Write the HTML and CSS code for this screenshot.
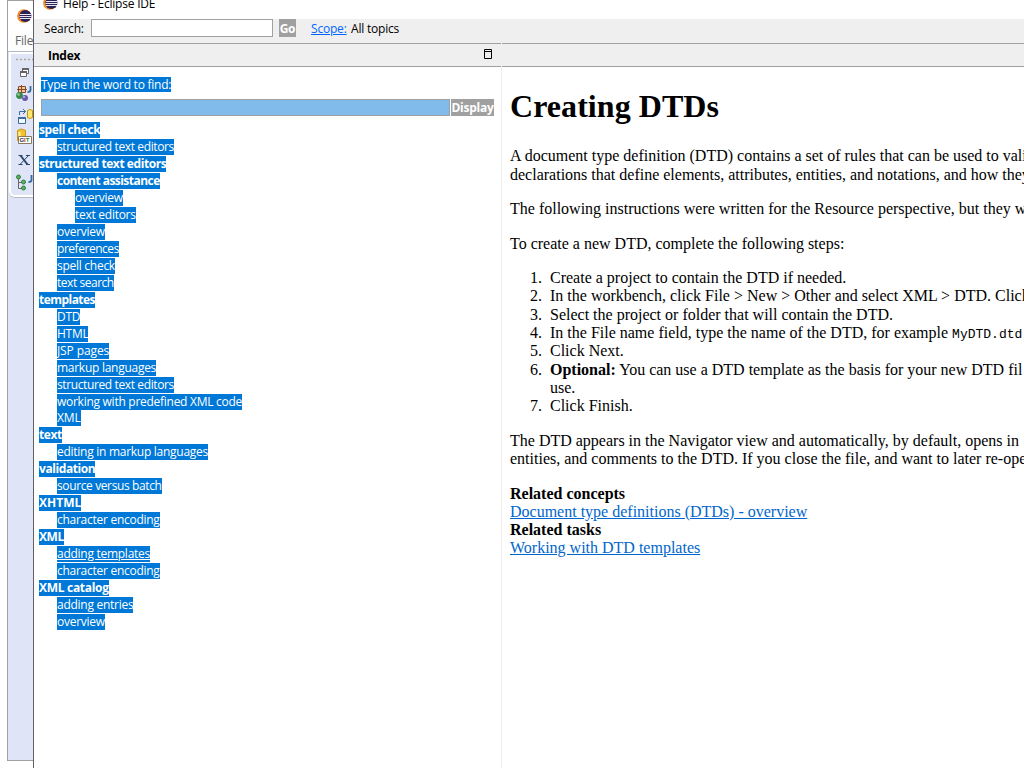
FILE: index.html
```html
<!DOCTYPE html>
<html lang="en">
<head>
<meta charset="utf-8">
<title>Help - Eclipse IDE</title>
<link rel="stylesheet" href="styles.css">
</head>
<body>
<svg width="0" height="0" class="defs"><defs>
<symbol id="eclipse" viewBox="0 0 15 14"><circle cx="6.800" cy="7" r="6.700" fill="#f28c28"/><circle cx="8.400" cy="7" r="6.100" fill="#2c2255"/><path d="M3 5.500h11M2.500 7.500h12M3 9.500h11" stroke="#e8e6f2" stroke-width="1"/></symbol>
</defs></svg>
<div class="screen">
  <div class="desk"></div>
  <aside class="ide">
    <div class="ide-title"><svg class="logo"><use href="#eclipse"/></svg></div>
    <div class="ide-menu">File</div>
    <div class="rail">
      <div class="tools">
        <svg width="25" height="142" viewBox="1 1 25 142">
          <path d="M8 6.500h18" stroke="#aaa797" stroke-width="1.300" stroke-dasharray="2 2"/>
          <g fill="#fff" stroke="#666" stroke-width="1"><path d="M14.500 15.500h6v5h-6z"/><path d="M14 16h7" stroke-width="2"/><path d="M12.500 18.500h6v5h-6z"/><path d="M12 19h7" stroke-width="2"/></g>
          <g stroke="#874b2c" fill="#f2c899"><path d="M10.500 33.500h7v6h-7zM9 36.500h10M13.500 32v8"/></g>
          <path d="M22.500 33v4q0 2-3 2" fill="none" stroke="#346ba2" stroke-width="1.800"/>
          <circle cx="11.500" cy="42.500" r="3.400" fill="#388a4a"/><circle cx="10.500" cy="41.500" r="1.200" fill="#9acd9a"/>
          <circle cx="17" cy="45" r="3" fill="#6959a9"/><circle cx="16" cy="44" r="1" fill="#c9c0ea"/>
          <path d="M11.500 62v-3.500h6M15 56l2.500 2.500L15 61" fill="none" stroke="#376da3"/>
          <path d="M10.500 64.500h7v6h-7z" fill="#f4fbff" stroke="#3d6c98"/><path d="M10 65h8" stroke="#3d6c98" stroke-width="2"/>
          <path d="M19.500 57.500q2.500-2 5 0v7q-2.500 2-5 0z" fill="#ffe76e" stroke="#c7950c"/>
          <path d="M9.500 77.500q4-3 8 0v10q-4 3-8 0z" fill="#f1c431" stroke="#c99619"/><path d="M11.500 79v8" stroke="#fff2a0" stroke-width="2"/>
          <path d="M10.500 83.500h13v7h-13z" fill="#fff" stroke="#8a795d"/><text x="11.400" y="89.300" class="git">G<tspan fill="#c22a28">I</tspan><tspan fill="#258044">T</tspan></text>
          <g fill="none" stroke="#29496b"><path d="M12.500 102.500l7 9" stroke-width="2"/><path d="M20.500 102.500l-8.500 9M10.500 102.500h4M18 102.500h4M10.500 111.500h4M18 111.500h4"/></g>
          <path d="M10.500 124v11.500h4M10.500 129.500h4" fill="none" stroke="#666"/>
          <g fill="#60ac63" stroke="#2c8045"><circle cx="10.500" cy="124" r="2"/><circle cx="15.500" cy="129" r="2"/><circle cx="15.500" cy="135" r="2"/></g>
          <path d="M23.500 122v5q0 2-3 2" fill="none" stroke="#346ba2" stroke-width="1.800"/>
        </svg>
      </div>
    </div>
  </aside>
  <main class="help">
    <header class="titlebar"><svg class="logo"><use href="#eclipse"/></svg><span>Help - Eclipse IDE</span></header>
    <div class="searchbar"><label class="lbl">Search:</label><div class="field"></div><b class="go">Go</b><a class="scope">Scope:</a><span class="topics">All topics</span></div>
    <div class="panes">
      <section class="index">
        <div class="bar"><b>Index</b><svg width="8" height="10"><path d="M.5.5h7v9h-7zM0 2.500h8" fill="none" stroke="#000"/></svg></div>
        <div class="prompt"><span class="hl">Type in the word to find:</span></div>
        <div class="find"><div class="word"></div><b class="display">Display</b></div>
        <ul class="tree">
          <li class="b"><span>spell check</span></li>
          <li class="l1 tight"><span>structured text editors</span></li>
          <li class="b"><span>structured text editors</span></li>
          <li class="l1 b tighter"><span>content assistance</span></li>
          <li class="l2"><span>overview</span></li>
          <li class="l2"><span>text editors</span></li>
          <li class="l1"><span>overview</span></li>
          <li class="l1 tighter"><span>preferences</span></li>
          <li class="l1"><span>spell check</span></li>
          <li class="l1 tighter"><span>text search</span></li>
          <li class="b tighter"><span>templates</span></li>
          <li class="l1"><span>DTD</span></li>
          <li class="l1"><span>HTML</span></li>
          <li class="l1 wide"><span>JSP pages</span></li>
          <li class="l1"><span>markup languages</span></li>
          <li class="l1 tight"><span>structured text editors</span></li>
          <li class="l1"><span>working with predefined XML code</span></li>
          <li class="l1 wide"><span>XML</span></li>
          <li class="b"><span>text</span></li>
          <li class="l1"><span>editing in markup languages</span></li>
          <li class="b"><span>validation</span></li>
          <li class="l1 tight"><span>source versus batch</span></li>
          <li class="b caps"><span>XHTML</span></li>
          <li class="l1"><span>character encoding</span></li>
          <li class="b"><span>XML</span></li>
          <li class="l1 u"><span>adding templates</span></li>
          <li class="l1"><span>character encoding</span></li>
          <li class="b wide"><span>XML catalog</span></li>
          <li class="l1"><span>adding entries</span></li>
          <li class="l1"><span>overview</span></li>
        </ul>
      </section>
      <section class="doc">
        <div class="bar"></div>
        <article>
          <h1>Creating DTDs</h1>
          <p>A document type definition (DTD) contains a set of rules that can be used to vali<br>declarations that define elements, attributes, entities, and notations, and how they</p>
          <p>The following instructions were written for the Resource perspective, but they w</p>
          <p>To create a new DTD, complete the following steps:</p>
          <ol>
            <li>Create a project to contain the DTD if needed.</li>
            <li>In the workbench, click File &gt; New &gt; Other and select XML &gt; DTD. Click</li>
            <li>Select the project or folder that will contain the DTD.</li>
            <li>In the File name field, type the name of the DTD, for example <code>MyDTD.dtd</code></li>
            <li>Click Next.</li>
            <li><b>Optional:</b> You can use a DTD template as the basis for your new DTD fil<br>use.</li>
            <li>Click Finish.</li>
          </ol>
          <p>The DTD appears in the Navigator view and automatically, by default, opens in<br>entities, and comments to the DTD. If you close the file, and want to later re-ope</p>
          <div class="related"><b>Related concepts</b><br><a>Document type definitions (DTDs) - overview</a><br><b>Related tasks</b><br><a>Working with DTD templates</a></div>
        </article>
      </section>
    </div>
  </main>
</div>
</body>
</html>
```
FILE: styles.css
```css
* { box-sizing: border-box; }
body { margin: 0; background: #fff; font: 12px "Open Sans", "Noto Sans", sans-serif; color: #000; overflow: hidden; }
.defs { display: block; position: absolute; }
.screen { display: flex; width: 1024px; height: 768px; overflow: hidden; }
.desk { width: 7px; flex: none; }
.ide { width: 26px; height: 761px; flex: none; overflow: hidden; border: 1px solid #a0a0a4; border-right: 0; display: flex; flex-direction: column; }
.logo { width: 15px; height: 14px; display: block; flex: none; }
.ide-title { height: 29px; padding: 8px 0 0 9px; }
.ide-menu { height: 21px; padding-left: 7px; line-height: 21px; color: #666; background: #fdfdfd; letter-spacing: -.2px; }
.rail { flex: 1; background: #dfe5f6; border-top: 1px solid #b5b9cb; }
.tools { height: 145px; margin-left: 1px; border: 2px solid #fff; border-right: 0; border-bottom-left-radius: 6px; box-shadow: 0 1px #b7bbc9; overflow: hidden; }
.tools svg { display: block; margin-left: -2px; }
.git { font: bold 6px "Liberation Sans", sans-serif; fill: #333; }
.help { width: 991px; flex: none; border-left: 1px solid #606066; display: flex; flex-direction: column; }
.titlebar { height: 19px; flex: none; display: flex; padding-left: 9px; overflow: hidden; letter-spacing: -.22px; }
.titlebar .logo { margin-top: -4px; }
.titlebar span { margin: -5px 0 0 5px; line-height: 17px; height: 17px; }
.searchbar { height: 24px; flex: none; display: flex; background: #efefef; line-height: 18px; padding-left: 10px; letter-spacing: -.2px; }
.lbl { width: 47px; padding-top: 1px; }
.field { width: 182px; height: 18px; background: #fff; border: 1px solid #a0a0a0; }
.go { width: 17px; height: 18px; margin-left: 6px; background: #a0a0a0; color: #fff; text-align: center; line-height: 20px; }
.scope { margin-left: 15px; width: 35px; padding-top: 1px; color: #0066ff; text-decoration: underline; }
.topics { margin-left: 5px; padding-top: 1px; }
.panes { flex: 1; display: flex; }
.index { width: 468px; flex: none; border-right: 1px solid #efefef; }
.bar { height: 24px; background: #efefef; border: solid #a0a0a0; border-width: 1px 0; display: flex; justify-content: space-between; padding: 5px 9px 0 14px; line-height: 14px; letter-spacing: -.25px; }
.prompt { padding: 10px 0 0 7px; height: 32px; line-height: 15px; }
.hl { display: block; width: max-content; height: 15px; line-height: 15px; background: #0078d7; color: #fff; letter-spacing: -.24px; }
.find { display: flex; padding-left: 7px; height: 22px; }
.word { width: 409px; height: 17px; border: 1px solid #a0a0a0; background: #80bbeb; }
.display { width: 43px; height: 17px; margin-left: 1px; background: #a0a0a0; color: #fff; line-height: 17px; text-align: center; letter-spacing: -.25px; }
.tree { list-style: none; margin: 0; padding: 1px 0 0 5px; }
.tree li { height: 16.970px; letter-spacing: -.27px; }
.tree span { display: block; width: max-content; height: 16px; line-height: 16px; background: #0078d7; color: #fff; }
.tree .l1 { padding-left: 18px; }
.tree .l2 { padding-left: 36px; }
.tree .b { font-weight: bold; letter-spacing: -.42px; }
.tree .tight { letter-spacing: -.38px; }
.tree .tighter { letter-spacing: -.46px; }
.tree .b.tighter { letter-spacing: -.54px; }
.tree .wide { letter-spacing: -.1px; }
.tree .b.wide { letter-spacing: -.3px; }
.tree .b.caps { letter-spacing: 0; }
.tree .u { text-decoration: underline; text-decoration-color: #fff; }
.doc { flex: 1; overflow: hidden; }
article { font: 16px/18.300px "Liberation Serif", "Times New Roman", serif; padding: 21px 0 0 8px; white-space: nowrap; }
h1 { font-size: 32px; line-height: 37px; margin: 0 0 22.300px; letter-spacing: .05px; }
p { margin: 0 0 16.200px; }
ol { margin: 0 0 16.300px; padding: 0 0 0 20px; list-style: none; counter-reset: step; }
ol li { padding-left: 20px; text-indent: -20px; counter-increment: step; }
ol li::before { content: counter(step) "."; display: inline-block; width: 20px; text-indent: 0; }
code { font: 13px/1 "Liberation Mono", monospace; }
article a { color: #0066cc; text-decoration: underline; }
```
